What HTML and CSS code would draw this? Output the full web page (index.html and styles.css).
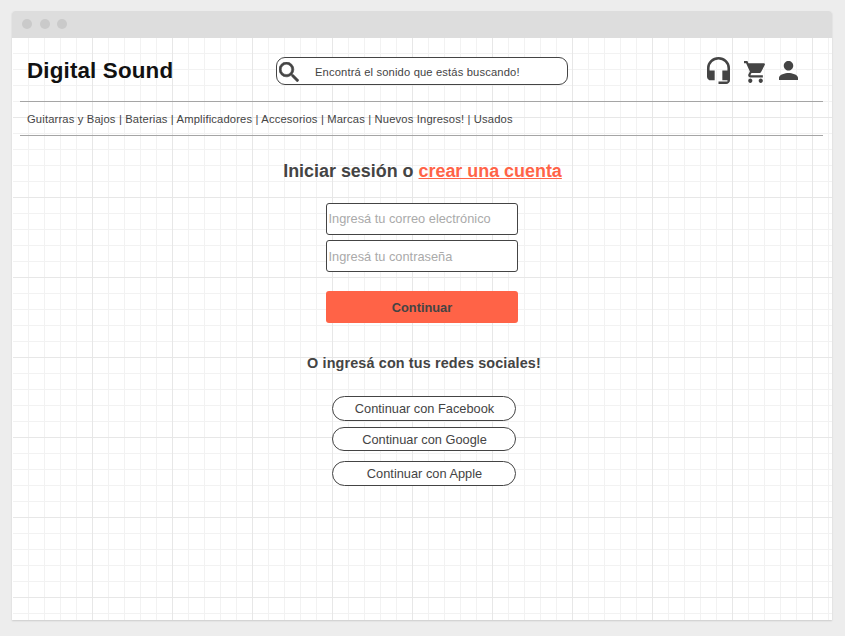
FILE: index.html
```html
<!DOCTYPE html>
<html lang="es">
<head>
<meta charset="utf-8">
<title>Digital Sound</title>
<link rel="stylesheet" href="styles.css">
</head>
<body>
<div class="window">
  <div class="titlebar"><span class="dot"></span><span class="dot"></span><span class="dot"></span></div>
  <div class="canvas">
    <header class="header">
      <h1 class="brand">Digital Sound</h1>
      <div class="search">
        <svg class="search-icon" viewBox="3 3 17.5 17.5"><path stroke="#444" stroke-width=".5" d="M15.5 14h-.79l-.28-.27A6.471 6.471 0 0 0 16 9.5 6.5 6.5 0 1 0 9.5 16c1.61 0 3.09-.59 4.23-1.57l.27.28v.79l5 4.99L20.49 19l-4.99-5zm-6 0C7.01 14 5 11.99 5 9.5S7.01 5 9.5 5 14 7.01 14 9.5 11.99 14 9.5 14z"/></svg>
        <span class="search-text">Encontrá el sonido que estás buscando!</span>
      </div>
      <div class="actions">
        <svg class="headset" viewBox="3 1 18 22" preserveAspectRatio="none"><path d="M12 1a9 9 0 0 0-9 9v7c0 1.66 1.34 3 3 3h3v-8H5v-2a7 7 0 0 1 14 0v2h-4v8h4v1h-7v2h6c1.66 0 3-1.34 3-3V10a9 9 0 0 0-9-9z"/></svg>
        <svg class="cart" viewBox="1 2 21 20" preserveAspectRatio="none"><path d="M7 18c-1.1 0-1.99.9-1.99 2S5.9 22 7 22s2-.9 2-2-.9-2-2-2zM1 2v2h2l3.6 7.59-1.35 2.45c-.16.28-.25.61-.25.96 0 1.1.9 2 2 2h12v-2H7.42c-.14 0-.25-.11-.25-.25l.03-.12.9-1.63h7.45c.75 0 1.41-.41 1.75-1.03l3.58-6.49A1 1 0 0 0 20 4H5.21l-.94-2H1zm16 16c-1.1 0-1.99.9-1.99 2s.89 2 1.99 2 2-.9 2-2-.9-2-2-2z"/></svg>
        <svg class="person" viewBox="4 4 16 16" preserveAspectRatio="none"><path d="M12 12c2.21 0 4-1.79 4-4s-1.79-4-4-4-4 1.79-4 4 1.79 4 4 4zm0 2c-2.67 0-8 1.34-8 4v2h16v-2c0-2.66-5.33-4-8-4z"/></svg>
      </div>
    </header>
    <nav class="nav">Guitarras y Bajos | Baterias | Amplificadores | Accesorios | Marcas | Nuevos Ingresos! | Usados</nav>
    <main class="login">
      <h2 class="heading">Iniciar sesión o <a class="create">crear una cuenta</a></h2>
      <div class="field">Ingresá tu correo electrónico</div>
      <div class="field password">Ingresá tu contraseña</div>
      <div class="submit">Continuar</div>
      <h3 class="social-heading">O ingresá con tus redes sociales!</h3>
      <div class="pill">Continuar con Facebook</div>
      <div class="pill google">Continuar con Google</div>
      <div class="pill apple">Continuar con Apple</div>
    </main>
  </div>
</div>
</body>
</html>
```
FILE: styles.css
```css
* { box-sizing: border-box; }
body {
  margin: 0;
  height: 636px;
  padding: 11px 13px 16px 12px;
  background: #ededed;
  color: #444;
  font-family: "Liberation Sans", Arial, sans-serif;
  overflow: hidden;
}
h1, h2, h3 { margin: 0; }
svg { display: block; fill: #444; flex: none; }
.window {
  height: 609px;
  display: flex;
  flex-direction: column;
  background: #fff;
  border-radius: 3px 3px 0 0;
  box-shadow: 0 1px 2px rgba(0, 0, 0, .14);
}
.titlebar {
  height: 27px;
  flex: none;
  display: flex;
  align-items: center;
  gap: 7.5px;
  padding: 0 0 1px 10px;
  background: #ddd;
  border-radius: 3px 3px 0 0;
}
.dot { width: 10px; height: 10px; border-radius: 50%; background: #cacaca; }
.canvas {
  flex: 1;
  margin-left: 1px;
  background-image:
    linear-gradient(#e7e7e7 1px, transparent 1px),
    linear-gradient(90deg, #e7e7e7 1px, transparent 1px),
    linear-gradient(#f2f2f2 1px, transparent 1px),
    linear-gradient(90deg, #f2f2f2 1px, transparent 1px);
  background-size: 80px 80px, 80px 80px, 16px 16px, 16px 16px;
  background-position: -1px -1px;
}
.header {
  height: 64px;
  margin: 0 9px 0 7px;
  padding-left: 7px;
  display: flex;
  align-items: flex-start;
  border-bottom: 1px solid #a5a5a5;
}
.brand {
  width: 249px;
  padding-top: 19px;
  font-size: 22.4px;
  letter-spacing: .15px;
  line-height: 28px;
  color: #111;
}
.search {
  width: 292px;
  height: 28px;
  margin-top: 19px;
  display: flex;
  align-items: center;
  padding-left: 2px;
  background: #fff;
  border: 1px solid #444;
  border-radius: 9px;
}
.search-icon { width: 20px; height: 20px; margin-top: 2px; }
.search-text { margin: 2px 0 0 16px; font-size: 11.2px; letter-spacing: .15px; line-height: 14px; white-space: nowrap; }
.actions { display: flex; align-items: flex-start; margin-left: 139px; padding-top: 19px; }
.headset { width: 23px; height: 27px; }
.cart { width: 22px; height: 22px; margin: 4px 0 0 14px; }
.person { width: 19px; height: 19px; margin: 4px 0 0 13px; }
.nav {
  height: 34px;
  margin: 0 9px 0 7px;
  padding-left: 7px;
  border-bottom: 1px solid #a5a5a5;
  font-size: 11.2px;
  letter-spacing: .165px;
  line-height: 34px;
}
.login { width: 192px; margin-left: 313px; display: flex; flex-direction: column; align-items: center; }
.heading { margin: 23px 0 0 1px; height: 24px; font-size: 17.92px; line-height: 24px; white-space: nowrap; }
.create { color: #ff6347; text-decoration: underline; }
.field {
  width: 192px;
  height: 32px;
  padding-left: 1.5px;
  border: 1px solid #444;
  border-radius: 3px;
  background: #fff;
  color: #aaa;
  font-size: 12.8px;
  line-height: 30px;
}
.heading + .field { margin: 20px 0 5px; }
.password { line-height: 32px; }
.submit {
  width: 192px;
  height: 32px;
  margin-top: 19px;
  border-radius: 3px;
  background: #ff6347;
  font-size: 12.8px;
  font-weight: bold;
  line-height: 33px;
  text-align: center;
}
.social-heading { margin: 30px 0 0 4px; height: 20px; font-size: 14.4px; letter-spacing: .13px; line-height: 20px; white-space: nowrap; }
.pill {
  width: 184px;
  height: 25px;
  margin: 23px 0 0 4px;
  border: 1px solid #444;
  border-radius: 13px;
  background: #fff;
  font-size: 12.8px;
  line-height: 23px;
  text-indent: 1px;
  text-align: center;
}
.google { height: 24px; margin-top: 6px; }
.apple { margin-top: 10px; }
```
